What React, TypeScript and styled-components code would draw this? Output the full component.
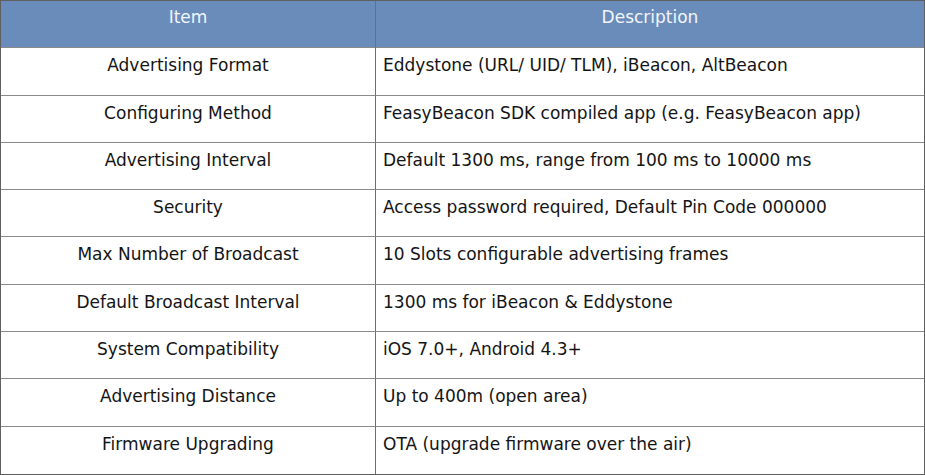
import React from "react";
import styled, {createGlobalStyle} from "styled-components";

const GlobalStyle = createGlobalStyle`
  html, body {
    margin: 0;
    padding: 0;
    background: #ffffff;
  }
`

const Table = styled.div`
  box-sizing: border-box;
  width: 925px;
  height: 475px;
  display: grid;
  grid-template-columns: 375px 1fr;
  grid-template-rows: repeat(10, 1fr);
  border: 1px solid #5f5f5f;
  font-family: "DejaVu Sans", Verdana, sans-serif;
  font-size: 17px;
  color: #141414;
`

const Cell = styled.div<{ $head?: boolean; $left?: boolean; $last?: boolean }>`
  box-sizing: border-box;
  padding: ${p => p.$head ? "6px" : "7px"} 7px 0 7px;
  text-align: ${p => p.$left || p.$head ? "center" : "left"};
  background: ${p => p.$head ? "#6a8cbb" : "#ffffff"};
  color: ${p => p.$head ? "#f2f5fa" : "#141414"};
  border-right: ${p => p.$left ? "1px solid #6f6f6f" : "none"};
  border-bottom: ${p => p.$last ? "none" : "1px solid #8a8a8a"};
`

const rows = [
    ["Advertising Format", "Eddystone (URL/ UID/ TLM), iBeacon, AltBeacon"],
    ["Configuring Method", "FeasyBeacon SDK compiled app (e.g. FeasyBeacon app)"],
    ["Advertising Interval", "Default 1300 ms, range from 100 ms to 10000 ms"],
    ["Security", "Access password required, Default Pin Code 000000"],
    ["Max Number of Broadcast", "10 Slots configurable advertising frames"],
    ["Default Broadcast Interval", "1300 ms for iBeacon & Eddystone"],
    ["System Compatibility", "iOS 7.0+, Android 4.3+"],
    ["Advertising Distance", "Up to 400m (open area)"],
    ["Firmware Upgrading", "OTA (upgrade firmware over the air)"],
];

const App = () => {
    return (
        <>
            <GlobalStyle/>
            <Table>
                <Cell $head $left>Item</Cell>
                <Cell $head>Description</Cell>
                {rows.map(([item, desc], i) => (
                    <React.Fragment key={item}>
                        <Cell $left $last={i === rows.length - 1}>{item}</Cell>
                        <Cell $last={i === rows.length - 1}>{desc}</Cell>
                    </React.Fragment>
                ))}
            </Table>
        </>
    );
};

export default App;
